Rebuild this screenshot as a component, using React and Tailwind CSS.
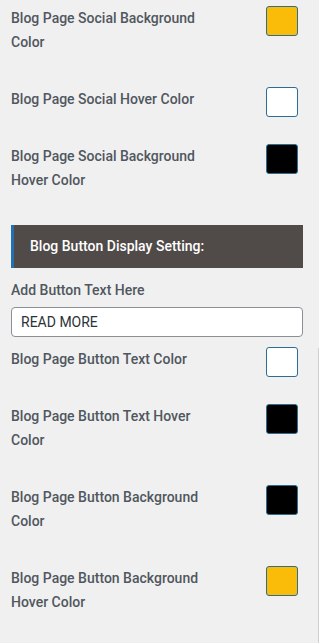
const rows1 = [
  { label: 'Blog Page Social Background Color', color: 'bg-[#fbbc09]' },
  { label: 'Blog Page Social Hover Color', color: 'bg-white' },
  { label: 'Blog Page Social Background Hover Color', color: 'bg-black' },
]

const rows2 = [
  { label: 'Blog Page Button Text Color', color: 'bg-white' },
  { label: 'Blog Page Button Text Hover Color', color: 'bg-black' },
  { label: 'Blog Page Button Background Color', color: 'bg-black' },
  { label: 'Blog Page Button Background Hover Color', color: 'bg-[#fbbc09]' },
]

// swatch is taller than one text line but the row height follows the text
function ColorRow({ label, color }) {
  return (
    <div className="flex items-start justify-between pb-[33px]">
      <p className="w-[212px] text-[14px] leading-[24px] font-medium text-[#50575e]">{label}</p>
      <div className={`w-[32px] h-[30px] -mb-[6px] rounded-[3px] border border-[#2c6e8f] mr-[20px] ${color}`} />
    </div>
  )
}

export default function App() {
  return (
    <div className="min-h-screen bg-[#f0f0f1] font-['Roboto',sans-serif] flex">
      <div className="flex-1 pl-[11px] pt-[6px]">
        {rows1.map((r) => (
          <ColorRow key={r.label} {...r} />
        ))}

        <div className="mr-[15px] h-[43px] bg-[#504a48] border-l-[3px] border-[#2271b1] flex items-center pl-[16px]">
          <span className="text-white text-[14px] font-medium">Blog Button Display Setting:</span>
        </div>

        <p className="mt-[12px] text-[14px] leading-[20px] font-medium text-[#50575e]">Add Button Text Here</p>
        <div className="mt-[7px] mr-[15px] h-[30px] rounded-[4px] border border-[#8c8f94] bg-white flex items-center pl-[9px]">
          <span className="text-[14px] text-[#2c3338]">READ MORE</span>
        </div>

        <div className="mt-[10px]">
          {rows2.map((r) => (
            <ColorRow key={r.label} {...r} />
          ))}
        </div>
      </div>
      <div className="w-px bg-[#d0d0d0] mt-[348px]" />
    </div>
  )
}
